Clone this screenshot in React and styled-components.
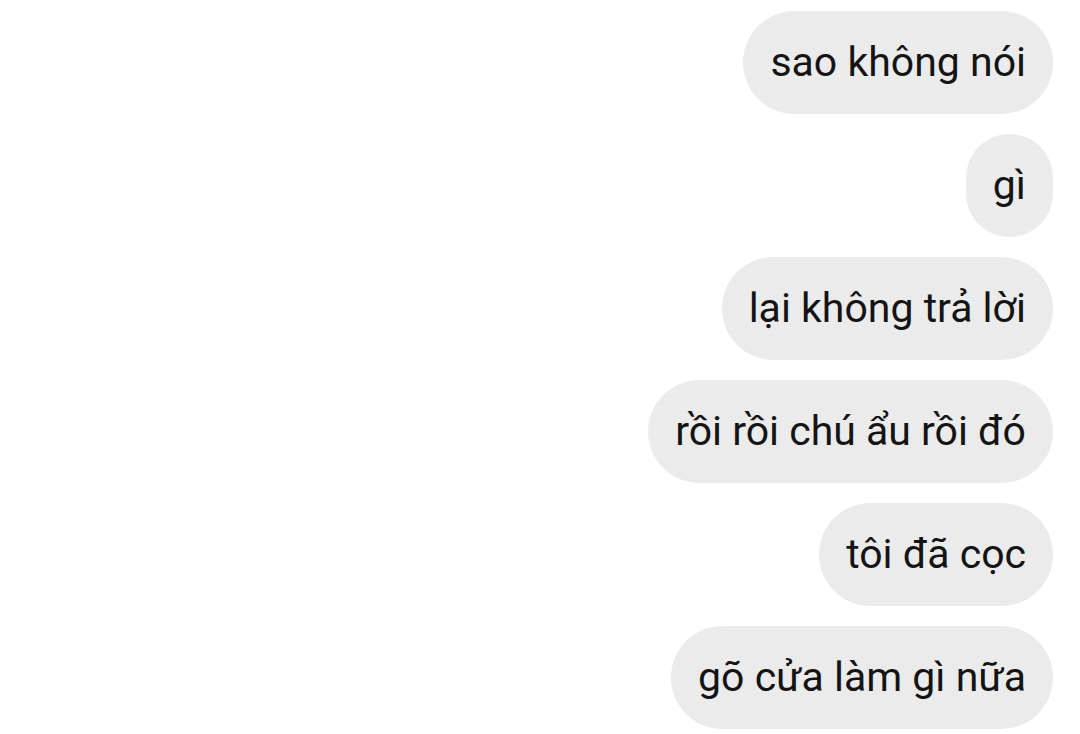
import React from "react";
import styled, { createGlobalStyle } from "styled-components";

const GlobalStyle = createGlobalStyle`
  html, body {
    margin: 0;
    padding: 0;
    background: #ffffff;
  }
  body {
    font-family: Roboto, "Noto Sans", sans-serif;
  }
`;

const Thread = styled.div`
  width: 1080px;
  height: 734px;
  box-sizing: border-box;
  padding: 11px 27px 0 0;
  display: flex;
  flex-direction: column;
  align-items: flex-end;
  gap: 20px;
  overflow: hidden;
`;

const Bubble = styled.div`
  height: 103px;
  box-sizing: border-box;
  padding: 0 27px 1px 27px;
  display: flex;
  align-items: center;
  background: #ebebeb;
  border-radius: 52px;
  color: #141414;
  font-size: 41px;
  font-weight: 400;
  white-space: nowrap;
`;

const messages = [
  "sao không nói",
  "gì",
  "lại không trả lời",
  "rồi rồi chú ẩu rồi đó",
  "tôi đã cọc",
  "gõ cửa làm gì nữa",
];

export default function App() {
  return (
    <>
      <GlobalStyle />
      <Thread>
        {messages.map((text, i) => (
          <Bubble key={i}>{text}</Bubble>
        ))}
      </Thread>
    </>
  );
}
